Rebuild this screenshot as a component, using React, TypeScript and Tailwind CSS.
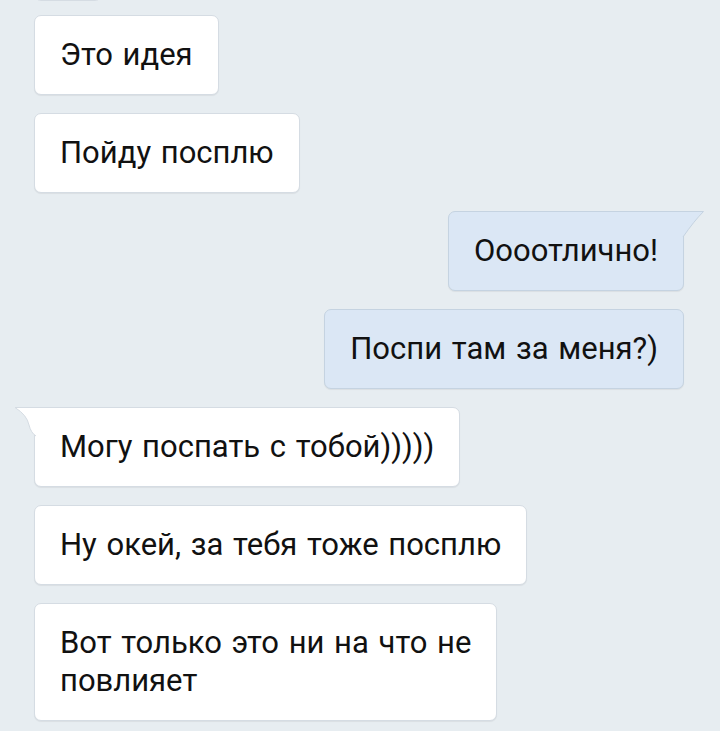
import React from 'react';

type Msg = { text: React.ReactNode; out?: boolean; tail?: boolean };

const messages: Msg[] = [
  { text: 'Это идея' },
  { text: 'Пойду посплю' },
  { text: 'Оооотлично!', out: true, tail: true },
  { text: 'Поспи там за меня?)', out: true },
  { text: 'Могу поспать с тобой)))))', tail: true },
  { text: 'Ну окей, за тебя тоже посплю' },
  {
    text: (
      <>
        Вот только это ни на что не
        <br />
        повлияет
      </>
    ),
  },
];

function Bubble({ text, out, tail }: Msg) {
  const colors = out
    ? 'bg-[#dbe7f5] border-[#c5d3e1] self-end mr-[36px]'
    : 'bg-white border-[#d5dce3] self-start ml-[34px]';
  const corner = tail ? (out ? 'rounded-tr-none' : 'rounded-tl-none') : '';

  return (
    <div
      className={`relative border rounded-[7px] px-[25px] py-[20px] text-[31px] leading-[38px] [word-spacing:2px] text-[#111] shadow-[0_1px_1px_rgba(0,0,0,0.06)] ${colors} ${corner}`}
    >
      {tail && out && (
        <svg className="absolute top-[-1px] right-[-22px]" width="23" height="28" viewBox="0 0 23 28">
          <path d="M0 0.5 H21.5 Q12 10 1 26 L0 27 Z" fill="#dbe7f5" />
          <path d="M0 0.5 H21.5 Q12 10 1 26" fill="none" stroke="#c5d3e1" strokeWidth="1" />
        </svg>
      )}
      {tail && !out && (
        <svg className="absolute top-[-1px] left-[-21px]" width="23" height="30" viewBox="0 0 23 30">
          <path d="M23 0.5 H1 Q13 8 15 18 Q17 26 22 29 L23 29 Z" fill="#ffffff" />
          <path d="M23 0.5 H1 Q13 8 15 18 Q17 26 22 29" fill="none" stroke="#d5dce3" strokeWidth="1" />
        </svg>
      )}
      <span className="whitespace-nowrap">{text}</span>
    </div>
  );
}

export default function App() {
  return (
    <div
      className="w-[720px] h-[731px] overflow-hidden bg-[#e7edf1] flex flex-col gap-[18px]"
      style={{ fontFamily: 'Roboto, "Noto Sans", sans-serif' }}
    >
      {/* bottom edge of the previous message, cut off by the screenshot */}
      <div className="-mt-[31px] -mb-[4px] ml-[34px] w-[68px] h-[32px] rounded-b-[7px] bg-white border border-[#d5dce3]" />
      {messages.map((m, i) => (
        <Bubble key={i} {...m} />
      ))}
    </div>
  );
}
